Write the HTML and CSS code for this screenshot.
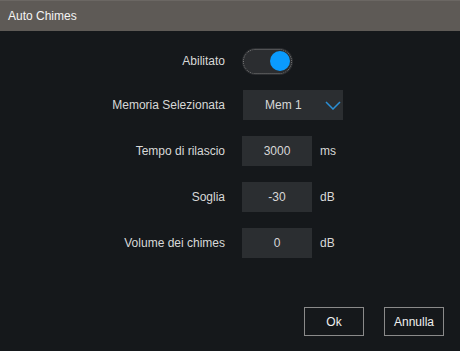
FILE: index.html
```html
<!DOCTYPE html>
<html>
<head>
<meta charset="utf-8">
<link rel="stylesheet" href="styles.css">
</head>
<body>
<div class="window">
  <div class="titlebar">Auto Chimes</div>
  <div class="content">
    <div class="row row-toggle">
      <span class="label">Abilitato</span>
      <div class="toggle"><span class="knob"></span></div>
    </div>
    <div class="row">
      <span class="label">Memoria Selezionata</span>
      <div class="select">
        <span class="select-value">Mem 1</span>
        <svg class="chevron" width="16" height="9" viewBox="0 0 16 9"><path d="M1 1 L8 8 L15 1" fill="none" stroke="#2a8fd6" stroke-width="1.5"/></svg>
      </div>
    </div>
    <div class="row">
      <span class="label">Tempo di rilascio</span>
      <div class="input">3000</div>
      <span class="unit">ms</span>
    </div>
    <div class="row">
      <span class="label">Soglia</span>
      <div class="input">-30</div>
      <span class="unit">dB</span>
    </div>
    <div class="row">
      <span class="label">Volume dei chimes</span>
      <div class="input">0</div>
      <span class="unit">dB</span>
    </div>
  </div>
  <div class="footer">
    <button class="btn">Ok</button>
    <button class="btn">Annulla</button>
  </div>
</div>
</body>
</html>
```
FILE: styles.css
```css
html, body {
  margin: 0;
  padding: 0;
  background: #15181b;
}
body {
  font-family: "Liberation Sans", Arial, sans-serif;
  font-size: 12px;
  color: #d8d8d8;
}
.window {
  width: 460px;
  height: 351px;
  display: flex;
  flex-direction: column;
  background: #15181b;
}
.titlebar {
  height: 30px;
  border-top: 1px solid #6b6763;
  background: #5e5a56;
  color: #f4f4f4;
  display: flex;
  align-items: center;
  padding-left: 8px;
  font-size: 12px;
}
.content {
  display: flex;
  flex-direction: column;
  gap: 16px;
  padding-top: 16px;
}
.row {
  display: flex;
  align-items: center;
  height: 30px;
}
.row-toggle {
  height: 28px;
  margin-bottom: -1px;
}
.label {
  width: 225px;
  text-align: right;
  margin-right: 17px;
}
.toggle {
  position: relative;
  width: 51px;
  height: 27px;
  border-radius: 14px;
  background: #2b2d30;
  box-sizing: border-box;
  display: flex;
  align-items: center;
  justify-content: flex-end;
  padding-right: 3px;
}
.toggle::after {
  content: "";
  position: absolute;
  inset: 1px;
  border: 1px dotted #7a7a7a;
  border-radius: 13px;
}
.knob {
  width: 20px;
  height: 20px;
  border-radius: 50%;
  background: #0a9bff;
}
.select {
  width: 100px;
  height: 30px;
  margin-left: 1px;
  background: #2b2e31;
  display: flex;
  align-items: center;
  box-sizing: border-box;
  padding-left: 22px;
  padding-right: 2px;
}
.select-value {
  flex: 1;
}
.chevron {
  margin-top: 1px;
}
.input {
  width: 70px;
  height: 30px;
  background: #2b2e31;
  display: flex;
  align-items: center;
  justify-content: center;
}
.unit {
  margin-left: 8px;
}
.footer {
  margin-top: auto;
  display: flex;
  justify-content: flex-end;
  gap: 20px;
  padding: 0 16px 15px 0;
}
.btn {
  width: 60px;
  height: 29px;
  background: transparent;
  border: 1px solid #8a8a8a;
  color: #f0f0f0;
  font-family: "Liberation Sans", Arial, sans-serif;
  font-size: 12px;
  padding: 0;
}
```
